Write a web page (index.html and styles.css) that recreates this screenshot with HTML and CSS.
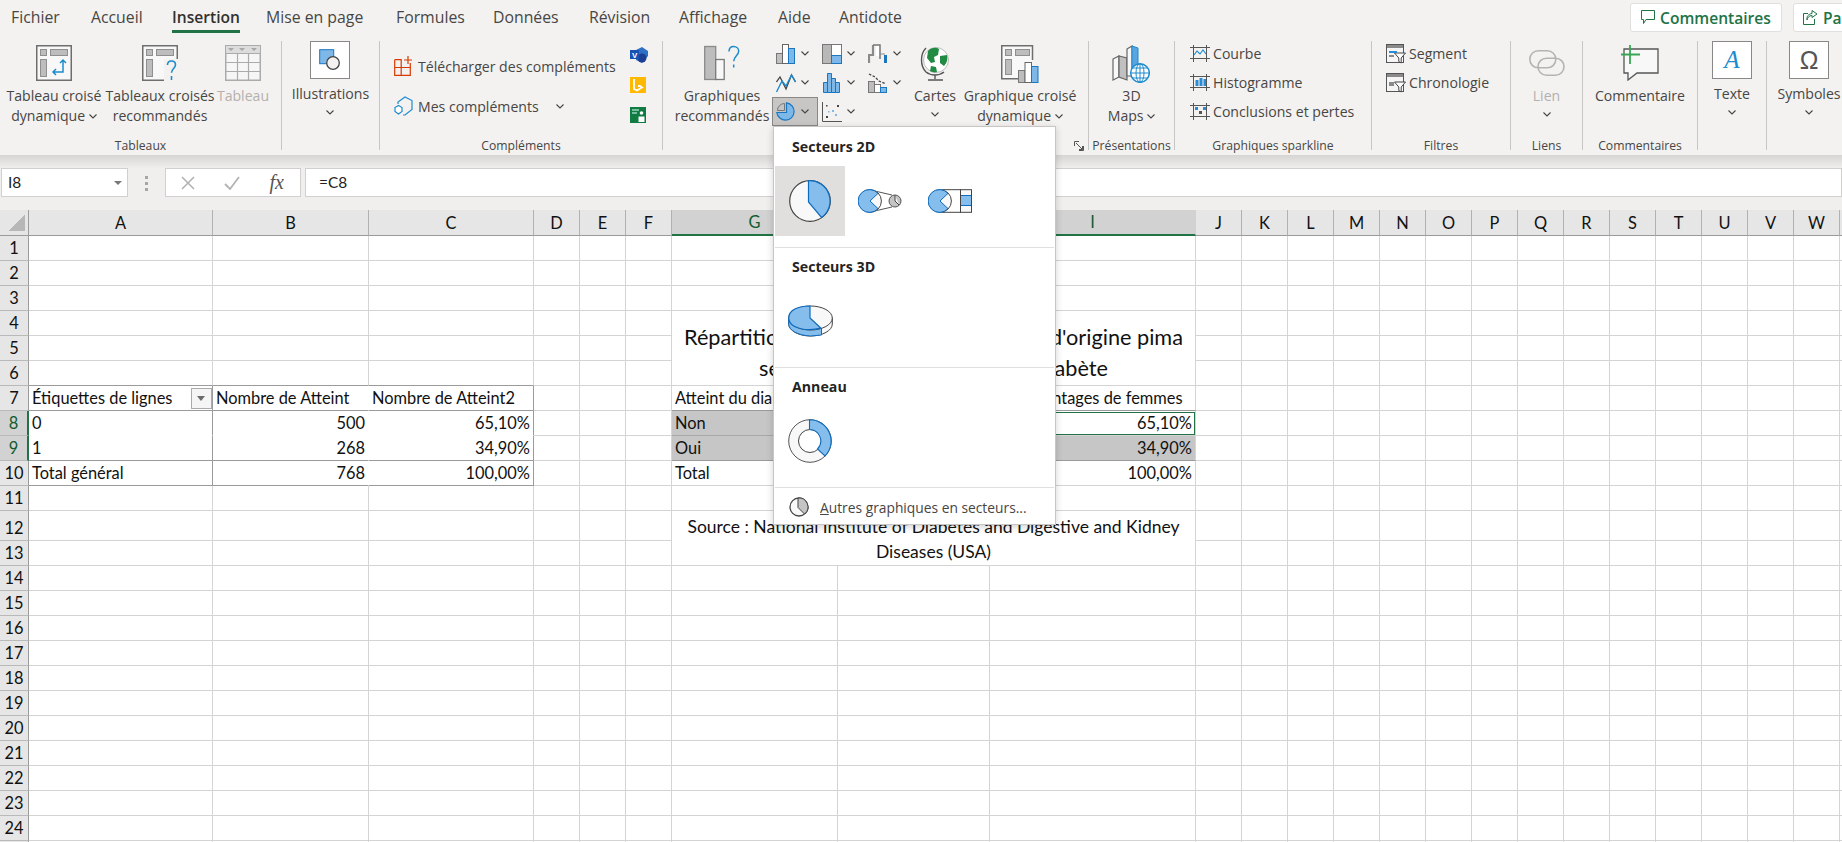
FILE: index.html
```html
<!DOCTYPE html>
<html lang="fr">
<head>
  <meta charset="UTF-8">
  <title>Excel - Insertion</title>
  <link rel="stylesheet" href="styles.css">
</head>
<body>

  <!-- icones du ruban -->
  <svg class="sprite" xmlns="http://www.w3.org/2000/svg">
    <symbol id="chev" viewBox="0 0 8 5"><path d="M.5.5 4 4 7.5.5" fill="none" stroke="#444" stroke-width="1.1"/></symbol>

    <symbol id="pivot-base" viewBox="0 0 36 36">
      <rect x=".75" y=".75" width="34.5" height="34.5" fill="#f8f8f8" stroke="#6e6e6e" stroke-width="1.5"/>
      <rect x="4.5" y="4.5" width="6" height="6" fill="#bdbdbd" stroke="#8f8f8f"/>
      <rect x="14.5" y="4.5" width="17" height="6" fill="#bdbdbd" stroke="#8f8f8f"/>
      <rect x="4.5" y="14.5" width="6" height="17" fill="#bdbdbd" stroke="#8f8f8f"/>
    </symbol>
    <symbol id="table-grey" viewBox="0 0 36 36">
      <rect x=".75" y=".75" width="34.5" height="34.5" fill="#f6f6f6" stroke="#ababab" stroke-width="1.5"/>
      <rect x="1" y="1" width="34" height="7" fill="#dcdcdc"/>
      <path d="M3 3h6l-3 3zM14 3h6l-3 3zM26 3h6l-3 3z" fill="#a8a8a8"/>
      <path d="M1 8.500h34M1 17.500h34M1 26.500h34M12.500 8v27M23.500 8v27" stroke="#ababab" stroke-width="1.200" fill="none"/>
    </symbol>

    <symbol id="i-col" viewBox="0 0 20 20">
      <rect x=".5" y="9.500" width="6" height="10" fill="#c0c0c0" stroke="#777"/>
      <rect x="6.500" y=".5" width="6" height="19" fill="#fff" stroke="#666"/>
      <rect x="12.500" y="4.500" width="6" height="15" fill="#7db8e8" stroke="#1b76c0"/>
    </symbol>
    <symbol id="i-tree" viewBox="0 0 20 20">
      <rect x=".5" y=".5" width="9" height="19" fill="#b8b8b8" stroke="#777"/>
      <rect x="9.500" y=".5" width="10" height="11" fill="#fff" stroke="#777"/>
      <rect x="9.500" y="11.500" width="10" height="8" fill="#7db8e8" stroke="#1b76c0"/>
    </symbol>
    <symbol id="i-fall" viewBox="0 0 20 20">
      <path d="M1 19v-8h4V1" fill="none" stroke="#8a8a8a" stroke-width="2.200"/>
      <path d="M5 1h7v14" fill="none" stroke="#777" stroke-width="1.500"/>
      <path d="M8 2h3v10H8z" fill="#fff"/>
      <path d="M17.500 11v8" stroke="#1b76c0" stroke-width="3"/>
      <path d="M12 10h5" stroke="#8a8a8a"/>
    </symbol>
    <symbol id="i-line" viewBox="0 0 20 20">
      <path d="M.5 9 4 4l6 12L15.500 2 19.500 9" fill="none" stroke="#444" stroke-width="1.300"/>
      <path d="M.5 19 6 8l4 5 5.500-11 4 7" fill="none" stroke="#1e8bcd" stroke-width="1.400"/>
    </symbol>
    <symbol id="i-hist" viewBox="0 0 20 20">
      <path d="M1.500 19.500v-10h4v10zM5.500 19.500V.5h4v19zM9.500 19.500v-14h4v14zM13.500 19.500v-10h4v10z" fill="#7db8e8" stroke="#1b76c0"/>
    </symbol>
    <symbol id="i-combo" viewBox="0 0 20 20">
      <rect x=".5" y="8.500" width="6" height="11" fill="#bdbdbd" stroke="#777"/>
      <rect x="6.500" y="11.500" width="6" height="8" fill="#fff" stroke="#777"/>
      <rect x="12.500" y="14.500" width="6" height="5" fill="#7db8e8" stroke="#1b76c0"/>
      <path d="M1 1l6 3 4 4 7 3" fill="none" stroke="#444" stroke-width="1.300" stroke-dasharray="2.500 1.500"/>
    </symbol>
    <symbol id="i-pie" viewBox="0 0 20 20">
      <path d="M8.500 1.500A7 7 0 0 0 1.500 8.500h7z" fill="#c4c4c4" stroke="#777"/>
      <path d="M10.500.8a8.700 8.700 0 1 1-9.700 9.700h9.700z" fill="#7db8e8" stroke="#1b76c0" stroke-width="1.200"/>
    </symbol>
    <symbol id="i-scatter" viewBox="0 0 20 20">
      <path d="M.5 0v19.500H20" fill="none" stroke="#555"/>
      <g fill="#444"><rect x="4" y="14" width="2" height="2"/><rect x="15" y="3" width="2" height="2"/><rect x="4" y="3" width="1.500" height="1.500"/></g>
      <g fill="#7db8e8"><rect x="10" y="8" width="2" height="2"/><rect x="6" y="9" width="1.500" height="1.500"/><rect x="13" y="12" width="2" height="2"/></g>
    </symbol>

    <symbol id="i-pie-large" viewBox="0 0 44 44">
      <circle cx="22" cy="22" r="20.300" fill="#f8f8f8" stroke="#444" stroke-width="1.200"/>
      <path d="M20.500 1.700A20.300 20.300 0 0 1 33.500 38.500L20.500 23z" fill="#85bdec" stroke="#0f6cbd" stroke-width="1.200"/>
    </symbol>
    <symbol id="pie-ofpie" viewBox="0 0 44 24">
      <path d="M11 .7 34 6M11 23.300 34 18" stroke="#555" fill="none"/>
      <circle cx="12" cy="12" r="11.400" fill="#f8f8f8" stroke="#444"/>
      <path d="M12 12 20 4.400A11.400 11.400 0 1 0 20 19.600z" fill="#85bdec" stroke="#0f6cbd"/>
      <circle cx="37" cy="12" r="6" fill="#c4c4c4" stroke="#555"/>
      <path d="M37 6v6l4 4" fill="#f8f8f8" stroke="#444"/>
    </symbol>
    <symbol id="pie-ofbar" viewBox="0 0 44 24">
      <path d="M11 .7h22M11 23.300h22" stroke="#444" fill="none"/>
      <circle cx="12" cy="12" r="11.400" fill="#f8f8f8" stroke="#444"/>
      <path d="M12 12 20 4.400A11.400 11.400 0 1 0 20 19.600z" fill="#85bdec" stroke="#0f6cbd"/>
      <rect x="32.500" y=".7" width="11" height="22.600" fill="#f8f8f8" stroke="#444"/>
      <rect x="33" y="6.500" width="10" height="10" fill="#85bdec"/>
      <path d="M33 6.500h10M33 16.500h10" stroke="#0f6cbd"/>
    </symbol>
    <symbol id="pie-3d" viewBox="0 0 45 32">
      <path d="M.7 13v6c0 6.500 9.600 12 21.800 12s21.800-5.500 21.800-12v-6z" fill="#f8f8f8" stroke="#444"/>
      <path d="M.7 13v6c0 6 8.800 11.300 21.800 12l11 -1V17z" fill="#85bdec" stroke="#0f6cbd"/>
      <ellipse cx="22.500" cy="13" rx="21.800" ry="12" fill="#f8f8f8" stroke="#444"/>
      <path d="M22 1v12l11 10.200C20 26.500.7 24 .7 13 .7 5 10 1 22 1z" fill="#85bdec" stroke="#0f6cbd" stroke-width="1.200"/>
    </symbol>
    <symbol id="pie-ring" viewBox="0 0 44 44">
      <circle cx="22" cy="22" r="21.300" fill="#f8f8f8" stroke="#555"/>
      <circle cx="22" cy="22" r="11.500" fill="#fff" stroke="#444"/>
      <path d="M21.500.8A21.300 21.300 0 0 1 37 37l-7.500-7A11.500 11.500 0 0 0 21.500 10.500z" fill="#85bdec" stroke="#0f6cbd" stroke-width="1.100"/>
    </symbol>

    <symbol id="spark-frame" viewBox="0 0 20 17">
      <path d="M0 2.500h20M0 13.500h20M3.500 0v17M16.500 0v17" stroke="#555" fill="none"/>
    </symbol>
    <symbol id="slicer" viewBox="0 0 20 20">
      <rect x=".5" y=".5" width="17" height="18" fill="#f5f5f5" stroke="#555"/>
      <rect x="1" y="1" width="16" height="3" fill="#8a8a8a"/>
      <path d="M8.500 9h11l-4.300 5v5l-2.400-1.500V14z" fill="#fff" stroke="#444"/>
    </symbol>
  </svg>

  <div class="app">

    <header class="tabbar">
      <nav class="tabs">
        <span class="tab">Fichier</span>
        <span class="tab">Accueil</span>
        <span class="tab"><span class="tab-active">Insertion</span></span>
        <span class="tab">Mise en page</span>
        <span class="tab">Formules</span>
        <span class="tab">Données</span>
        <span class="tab">Révision</span>
        <span class="tab">Affichage</span>
        <span class="tab">Aide</span>
        <span class="tab">Antidote</span>
      </nav>
      <div class="share-btns">
        <div class="top-btn top-comments">
          <svg width="14" height="15" viewBox="0 0 14 15"><path d="M.5.5h13v9H5L2.500 13.500v-4h-2z" fill="none" stroke="#217346"/></svg>
          Commentaires
        </div>
        <div class="top-btn top-share">
          <svg width="15" height="15" viewBox="0 0 15 15"><path d="M5 3.500H.5v11h11V9M9 .5l5 3.500-5 3.500V5.500C6 5.500 4.500 7.500 4 10c-.5-4 1.500-6 5-6.500z" fill="none" stroke="#217346"/></svg>
          Partager
        </div>
      </div>
    </header>

    <section class="ribbon">

      <div class="group w-tableaux">
        <div class="group-body">
          <div class="big w-108">
            <svg class="big-ico" width="36" height="36" viewBox="0 0 36 36"><use href="#pivot-base" width="36" height="36"/><path d="M27 15v12H17M24 18l3-3 3 3M20 24l-3 3 3 3" fill="none" stroke="#1e8bcd" stroke-width="1.500"/></svg>
            <span>Tableau croisé</span>
            <span>dynamique <svg class="chev"><use href="#chev"/></svg></span>
          </div>
          <div class="big w-104">
            <svg class="big-ico" width="36" height="36" viewBox="0 0 36 36"><use href="#pivot-base" width="36" height="36"/><rect x="22" y="14" width="15" height="22" fill="#f3f2f1"/><path d="M25.500 20c0-2.500 1.800-4 4-4s4 1.500 4 3.800c0 3.500-4 4-4 8M29.500 31v4" fill="none" stroke="#1e8bcd" stroke-width="1.600"/></svg>
            <span>Tableaux croisés</span>
            <span>recommandés</span>
          </div>
          <div class="big w-62 off">
            <svg class="big-ico" width="36" height="36"><use href="#table-grey"/></svg>
            <span>Tableau</span>
          </div>
        </div>
        <div class="group-name">Tableaux</div>
      </div>
      <i class="sep"></i>

      <div class="group w-illus">
        <div class="group-body center">
          <div class="boxed">
            <div class="box">
              <svg width="22" height="22" viewBox="0 0 22 22"><rect x=".7" y=".7" width="14" height="14" fill="#7db8e8" stroke="#1b76c0"/><circle cx="14" cy="14" r="6.300" fill="#f3f2f1" stroke="#444" stroke-width="1.300"/></svg>
            </div>
            <span>Illustrations</span>
            <svg class="chev"><use href="#chev"/></svg>
          </div>
        </div>
        <div class="group-name"></div>
      </div>
      <i class="sep"></i>

      <div class="group w-addins">
        <div class="group-body">
          <div class="addin-rows">
            <div class="addin-row">
              <svg width="20" height="20" viewBox="0 0 20 20"><path d="M.7 3.700h6.500v15.600M.7 11.500h15.600M.7 3.700v15.600h15.600V7M7.500 3.700" fill="none" stroke="#d83b01" stroke-width="1.200"/><path d="M14 0v8M10 4h8" stroke="#d83b01" stroke-width="1.200"/></svg>
              <span>Télécharger des compléments</span>
            </div>
            <div class="addin-row">
              <svg width="20" height="20" viewBox="0 0 20 20"><path d="M4 8V6l7-5 7 3.500v9l-7 5.500H9" fill="none" stroke="#1e8bcd" stroke-width="1.200"/><path d="M4.500 9.500 8 11.500v4L4.500 18 1 15.500v-4z" fill="#fff" stroke="#1e8bcd" stroke-width="1.200"/></svg>
              <span>Mes compléments</span>
              <svg class="chev addin-chev"><use href="#chev"/></svg>
            </div>
          </div>
          <div class="addin-apps">
            <svg width="18" height="16" viewBox="0 0 18 16"><path d="M6 3 12 0l6 4v5l-6 7-6-3z" fill="#2f6fc4"/><circle cx="12" cy="11" r="4.500" fill="#1c3f94"/><rect x="0" y="3" width="9" height="9" fill="#1851b4"/><text x="2" y="10.500" class="app-letter">V</text></svg>
            <svg width="18" height="16" viewBox="0 0 18 16"><rect width="16" height="16" fill="#ffb900"/><path d="M4 2v10l3 1.500 5-3-2-1.500H8" fill="none" stroke="#fff" stroke-width="1.800"/></svg>
            <svg width="18" height="16" viewBox="0 0 18 16"><rect width="16" height="16" fill="#107c41"/><path d="M2 3h7M2 6h5" stroke="#dff" stroke-width="1.200"/><circle cx="11.500" cy="6" r="1.800" fill="#fff"/><path d="M8.500 15v-5.500h6V15z" fill="#fff"/></svg>
          </div>
        </div>
        <div class="group-name">Compléments</div>
      </div>
      <i class="sep"></i>

      <div class="group w-charts">
        <div class="group-body">
          <div class="big w-rec">
            <svg class="big-ico" width="36" height="35" viewBox="0 0 36 35"><rect x=".7" y="1" width="11" height="33" fill="#bdbdbd" stroke="#8a8a8a" stroke-width="1.300"/><rect x="11.700" y="14" width="8.500" height="20" fill="#f8f8f8" stroke="#7a7a7a" stroke-width="1.300"/><path d="M25 6c0-3 2-5 4.700-5s5 2 5 4.800c0 4-5 5-5 10M29.700 19v3" fill="none" stroke="#1e8bcd" stroke-width="1.500"/></svg>
            <span>Graphiques</span>
            <span>recommandés</span>
          </div>
          <div class="chart-grid">
            <div class="mini"><svg width="20" height="20"><use href="#i-col"/></svg><svg class="chev"><use href="#chev"/></svg></div>
            <div class="mini"><svg width="20" height="20"><use href="#i-tree"/></svg><svg class="chev"><use href="#chev"/></svg></div>
            <div class="mini"><svg width="20" height="20"><use href="#i-fall"/></svg><svg class="chev"><use href="#chev"/></svg></div>
            <div class="mini"><svg width="20" height="20"><use href="#i-line"/></svg><svg class="chev"><use href="#chev"/></svg></div>
            <div class="mini"><svg width="20" height="20"><use href="#i-hist"/></svg><svg class="chev"><use href="#chev"/></svg></div>
            <div class="mini"><svg width="20" height="20"><use href="#i-combo"/></svg><svg class="chev"><use href="#chev"/></svg></div>
            <div class="mini mini-open"><svg width="20" height="20"><use href="#i-pie"/></svg><svg class="chev"><use href="#chev"/></svg></div>
            <div class="mini"><svg width="20" height="20"><use href="#i-scatter"/></svg><svg class="chev"><use href="#chev"/></svg></div>
          </div>
          <div class="big w-cartes">
            <svg class="big-ico" width="30" height="36" viewBox="0 0 30 36">
              <circle cx="16" cy="15" r="12.500" fill="#fff" stroke="#bbb"/>
              <path d="M8 6c3-3.500 8-4 11-2l-1 6-4 2 1 5-4 1-4-5zM20 11l7-1c1 4 0 8-3 11l-4-3zM11 21l5 1 1 5c-3 1-5 0-7-1z" fill="#218a43"/>
              <path d="M6 3C0 9 0 21 6 27c5 4 13 4 18 0" fill="none" stroke="#555" stroke-width="1.400"/>
              <path d="M15 30v4M8 35h15" stroke="#555" stroke-width="1.400"/>
            </svg>
            <span>Cartes</span>
            <svg class="chev chev-line"><use href="#chev"/></svg>
          </div>
          <div class="big w-120">
            <svg class="big-ico" width="38" height="38" viewBox="0 0 38 38">
              <path d="M31.500 15V.75H.75v33h17" fill="#f8f8f8" stroke="#6e6e6e" stroke-width="1.500"/>
              <rect x="4.500" y="4.500" width="6" height="6" fill="#bdbdbd" stroke="#8f8f8f"/>
              <rect x="14.500" y="4.500" width="14" height="6" fill="#bdbdbd" stroke="#8f8f8f"/>
              <rect x="4.500" y="14.500" width="6" height="15" fill="#bdbdbd" stroke="#8f8f8f"/>
              <rect x="17.500" y="25.500" width="6.500" height="12" fill="#bdbdbd" stroke="#777"/>
              <rect x="24" y="17.500" width="6.500" height="20" fill="#fff" stroke="#666"/>
              <rect x="30.500" y="21.500" width="6.500" height="16" fill="#7db8e8" stroke="#1b76c0"/>
            </svg>
            <span>Graphique croisé</span>
            <span>dynamique <svg class="chev"><use href="#chev"/></svg></span>
          </div>
        </div>
        <div class="group-name">Graphiques
          <svg class="launcher" width="10" height="10" viewBox="0 0 10 10"><path d="M9.500 5v4.500H5M.5 5V.5H5M2 2l6.500 6.500M5 8.500h3.500V5" fill="none" stroke="#555"/></svg>
        </div>
      </div>
      <i class="sep"></i>

      <div class="group w-pres">
        <div class="group-body center">
          <div class="big">
            <svg class="big-ico" width="38" height="38" viewBox="0 0 38 38">
              <path d="M1 14l6-3v21l-6 3z" fill="#f8f8f8" stroke="#666" stroke-width="1.200"/>
              <path d="M7 11l8 2v22l-8-3z" fill="#c0c0c0" stroke="#666" stroke-width="1.200"/>
              <path d="M15 4l5-3v30H15z" fill="#f8f8f8" stroke="#666" stroke-width="1.200"/>
              <path d="M20 1l6 2v20h-6z" fill="#5aa5e0" stroke="#1e8bcd"/>
              <circle cx="28" cy="28" r="9.300" fill="#fff" stroke="#1e8bcd" stroke-width="1.500"/>
              <path d="M19 28h18M28 19v18M21 23h14M21 33h14" stroke="#1e8bcd" fill="none"/>
              <ellipse cx="28" cy="28" rx="4" ry="9.300" fill="none" stroke="#1e8bcd"/>
            </svg>
            <span>3D</span>
            <span>Maps <svg class="chev"><use href="#chev"/></svg></span>
          </div>
        </div>
        <div class="group-name">Présentations</div>
      </div>
      <i class="sep"></i>

      <div class="group w-spark">
        <div class="group-body col-list">
          <div class="list-row">
            <svg width="20" height="17"><use href="#spark-frame"/><path d="M4 10l3-4 3 3 3-4 3 4" fill="none" stroke="#1e8bcd" stroke-width="1.100"/></svg>
            <span>Courbe</span>
          </div>
          <div class="list-row">
            <svg width="20" height="17"><use href="#spark-frame"/><path d="M5.500 6h3v6h-3zM9.500 4h3v8h-3zM13.500 5h2.500v7h-2.500z" fill="#2a8ad4"/></svg>
            <span>Histogramme</span>
          </div>
          <div class="list-row">
            <svg width="20" height="17"><use href="#spark-frame"/><path d="M5 4h3v3H5zM13 4h3v3h-3z" fill="#2a8ad4"/><path d="M9 8h3v3H9z" fill="#555"/></svg>
            <span>Conclusions et pertes</span>
          </div>
        </div>
        <div class="group-name">Graphiques sparkline</div>
      </div>
      <i class="sep"></i>

      <div class="group w-filters">
        <div class="group-body col-list">
          <div class="list-row">
            <svg width="20" height="20"><use href="#slicer"/><path d="M3 7h8v2H3z" fill="#2a8ad4"/><path d="M3 11h5v2H3z" fill="#8a8a8a"/></svg>
            <span>Segment</span>
          </div>
          <div class="list-row">
            <svg width="20" height="20"><use href="#slicer"/><rect x="3" y="9" width="5" height="4" fill="#8a8a8a"/></svg>
            <span>Chronologie</span>
          </div>
        </div>
        <div class="group-name">Filtres</div>
      </div>
      <i class="sep"></i>

      <div class="group w-links">
        <div class="group-body center">
          <div class="big off">
            <svg class="ico-link" width="36" height="26" viewBox="0 0 36 26"><g fill="none" stroke="#b5b3b1" stroke-width="1.600"><rect x=".8" y=".8" width="26" height="17" rx="8.500"/><rect x="9" y="8.200" width="26" height="17" rx="8.500"/></g></svg>
            <span>Lien</span>
            <svg class="chev chev-line"><use href="#chev"/></svg>
          </div>
        </div>
        <div class="group-name">Liens</div>
      </div>
      <i class="sep"></i>

      <div class="group w-notes">
        <div class="group-body center">
          <div class="big">
            <svg class="big-ico" width="38" height="36" viewBox="0 0 38 36">
              <path d="M3 4h34v24H16l-9 7v-7H3z" fill="#f8f8f8" stroke="#555" stroke-width="1.300"/>
              <path d="M9 0v19M0 9.500h19" stroke="#3aa655" stroke-width="1.800"/>
            </svg>
            <span>Commentaire</span>
          </div>
        </div>
        <div class="group-name">Commentaires</div>
      </div>
      <i class="sep"></i>

      <div class="group w-text">
        <div class="group-body center">
          <div class="boxed">
            <div class="box glyph-a">A</div>
            <span>Texte</span>
            <svg class="chev"><use href="#chev"/></svg>
          </div>
        </div>
      </div>
      <i class="sep"></i>

      <div class="group w-sym">
        <div class="group-body center">
          <div class="boxed">
            <div class="box glyph-o">Ω</div>
            <span>Symboles</span>
            <svg class="chev"><use href="#chev"/></svg>
          </div>
        </div>
      </div>
    </section>

    <div class="ribbon-shadow"></div>

    <div class="formula-bar">
      <div class="name-box">I8<i class="tri"></i></div>
      <div class="grip"><i></i><i></i><i></i></div>
      <div class="fx-btns">
        <svg width="14" height="14" viewBox="0 0 14 14"><path d="M1 1l12 12M13 1 1 13" stroke="#b3b3b3" stroke-width="1.600"/></svg>
        <svg width="16" height="14" viewBox="0 0 16 14"><path d="M1 8l5 5L15 1" fill="none" stroke="#b3b3b3" stroke-width="1.800"/></svg>
        <span class="fx">fx</span>
      </div>
      <div class="formula-input">=C8</div>
    </div>

    <div class="sheet-wrap" id="sheetWrap"></div>

    <!-- menu deroulant Secteurs -->
    <div class="pie-menu">
      <div class="menu-sec">
        <h4>Secteurs 2D</h4>
        <div class="menu-items">
          <div class="menu-item hover"><svg width="44" height="44"><use href="#i-pie-large"/></svg></div>
          <div class="menu-item"><svg width="44" height="24"><use href="#pie-ofpie"/></svg></div>
          <div class="menu-item"><svg width="44" height="24"><use href="#pie-ofbar"/></svg></div>
        </div>
      </div>
      <div class="menu-sec">
        <h4>Secteurs 3D</h4>
        <div class="menu-items">
          <div class="menu-item"><svg width="45" height="32"><use href="#pie-3d"/></svg></div>
        </div>
      </div>
      <div class="menu-sec">
        <h4>Anneau</h4>
        <div class="menu-items">
          <div class="menu-item"><svg width="44" height="44"><use href="#pie-ring"/></svg></div>
        </div>
      </div>
      <div class="menu-foot">
        <svg width="20" height="20" viewBox="0 0 20 20"><circle cx="10" cy="10" r="9" fill="#f8f8f8" stroke="#444" stroke-width="1.300"/><path d="M9 1v9.500l6.500 6.500A9 9 0 0 0 9 1z" fill="#c4c4c4" stroke="#444"/></svg>
        <span><u>A</u>utres graphiques en secteurs...</span>
      </div>
    </div>

  </div>

  <script src="sheet.js"></script>
</body>
</html>
```

FILE: styles.css
```css
* {
  box-sizing: border-box;
}

body {
  margin: 0;
  width: 1842px;
  height: 842px;
  overflow: hidden;
  background: #fff;
  font-family: "Open Sans", sans-serif;
  font-size: 14.1px;
  color: #484644;
}

.sprite {
  position: absolute;
  width: 0;
  height: 0;
}

.app {
  position: relative;
  width: 1842px;
  height: 842px;
  overflow: hidden;
}

/* onglets */
.tabbar {
  display: flex;
  height: 38px;
  background: #f3f2f1;
}

.tabs {
  display: grid;
  grid-template-columns: 80px 81px 94px 130px 97px 96px 90px 99px 61px 90px;
  padding: 7px 0 0 11px;
  font-size: 15.8px;
  line-height: 20px;
  white-space: nowrap;
}

.tab-active {
  display: inline-block;
  height: 26px;
  border-bottom: 3px solid #217346;
  font-weight: 600;
  font-size: 15.6px;
  color: #323130;
}

.share-btns {
  display: flex;
  gap: 11px;
  margin-left: auto;
  padding-top: 3px;
  width: 212px;
  flex-shrink: 0;
}

.top-btn {
  display: flex;
  align-items: center;
  gap: 5px;
  height: 29px;
  background: #fff;
  border: 1px solid #e1dfdd;
  border-radius: 3px;
  font-size: 15.6px;
  font-weight: 600;
  color: #217346;
  white-space: nowrap;
}

.top-btn svg {
  flex: none;
}

.top-comments {
  width: 152px;
  flex-shrink: 0;
  padding-left: 10px;
}

.top-share {
  width: 80px;
  flex-shrink: 0;
  padding-left: 9px;
}

/* ruban */
.ribbon {
  display: flex;
  height: 117px;
  padding-top: 3px;
  background: #f3f2f1;
}

.sep {
  flex: none;
  width: 1px;
  height: 109px;
  background: #c8c6c4;
}

.group {
  flex: none;
  display: flex;
  flex-direction: column;
  white-space: nowrap;
}

.group-body {
  display: flex;
  height: 98px;
}

.group-body.center {
  justify-content: center;
}

.group-name {
  position: relative;
  height: 14px;
  line-height: 14px;
  text-align: center;
  font-size: 12.2px;
}

.w-tableaux { width: 281px; }
.w-illus { width: 97px; }
.w-addins { width: 282px; }
.w-charts { width: 425px; padding-left: 7px; }
.w-pres { width: 85px; }
.w-spark { width: 196px; }
.w-filters { width: 138px; }
.w-links { width: 71px; }
.w-notes { width: 114px; }
.w-text { width: 68px; }
.w-sym { width: 84px; }

.w-108 { width: 108px; }
.w-104 { width: 104px; }
.w-62 { width: 62px; }
.w-120 { width: 120px; }
.w-rec { width: 104px; }
.w-cartes { width: 50px; }

.w-charts .group-name {
  margin-left: -7px;
}

.big {
  display: flex;
  flex-direction: column;
  align-items: center;
  line-height: 20px;
}

.big-ico {
  height: 36px;
  margin: 4px 0 5px;
  flex: none;
}

.w-charts .w-120 .big-ico,
.w-pres .big-ico {
  height: 38px;
  margin: 4px 0 3px;
}

.ico-link {
  margin: 9px 0 10px;
  flex: none;
}

.off {
  color: #b3b0ad;
}

.chev {
  display: inline-block;
  width: 8px;
  height: 5px;
  vertical-align: 2px;
}

.chev-line {
  margin-top: 6px;
}

.boxed {
  display: flex;
  flex-direction: column;
  align-items: center;
  line-height: 20px;
}

.boxed .chev {
  margin-top: 6px;
}

.box {
  display: flex;
  align-items: center;
  justify-content: center;
  width: 40px;
  height: 38px;
  margin-bottom: 5px;
  background: #fff;
  border: 1px solid #8a8886;
}

.glyph-a {
  font-family: "Liberation Serif", serif;
  font-style: italic;
  font-size: 25px;
  color: #1e8bcd;
}

.glyph-o {
  font-family: "Liberation Sans", sans-serif;
  font-size: 25px;
  color: #555;
}

/* complements */
.addin-rows {
  width: 250px;
  padding: 15px 0 0 14px;
  display: flex;
  flex-direction: column;
  gap: 20px;
}

.addin-row {
  display: flex;
  align-items: center;
  gap: 4px;
  height: 20px;
  position: relative;
}

.addin-chev {
  margin-left: 13px;
  vertical-align: 0;
}

.addin-apps {
  display: flex;
  flex-direction: column;
  gap: 14px;
  padding-top: 6px;
}

.app-letter {
  font-family: "Liberation Sans", sans-serif;
  font-size: 8px;
  font-weight: 700;
  fill: #fff;
}

/* petits graphiques */
.chart-grid {
  display: grid;
  grid-template-columns: repeat(3, 46px);
  grid-auto-rows: 29px;
  margin: -2px 0 0 -2px;
  width: 138px;
  height: 87px;
  flex: none;
}

.mini {
  display: flex;
  align-items: center;
  gap: 5px;
  padding-left: 4px;
}

.mini-open {
  background: #c8c6c4;
  border: 1px solid #8a8886;
  padding-left: 3px;
}

.launcher {
  position: absolute;
  right: 4px;
  top: 2px;
}

/* listes sparkline et filtres */
.col-list {
  flex-direction: column;
  margin-top: -2px;
  height: 100px;
  padding-left: 15px;
}

.list-row {
  display: flex;
  align-items: center;
  gap: 3px;
  height: 29px;
}

.w-filters .col-list {
  padding-left: 14px;
}

/* barre de formule */
.ribbon-shadow {
  height: 13px;
  background: linear-gradient(#d6d5d4, #efeeed);
}

.formula-bar {
  display: flex;
  height: 42px;
  padding: 0 0 13px 1px;
  background: #f0efee;
  font-family: "Lato", sans-serif;
  color: #222;
}

.name-box,
.fx-btns,
.formula-input {
  height: 29px;
  background: #fff;
  border: 1px solid #d2d0ce;
}

.name-box {
  position: relative;
  width: 127px;
  padding-left: 6px;
  line-height: 27px;
  font-size: 15.4px;
}

.tri {
  position: absolute;
  right: 5px;
  top: 12px;
  border: 4px solid transparent;
  border-top: 4px solid #777;
  border-bottom: 0;
}

.grip {
  display: flex;
  flex-direction: column;
  align-items: center;
  gap: 3px;
  width: 37px;
  padding-top: 8px;
}

.grip i {
  width: 3px;
  height: 3px;
  background: #a6a6a6;
}

.fx-btns {
  display: flex;
  align-items: center;
  justify-content: space-between;
  width: 136px;
  padding: 0 16px 0 15px;
}

.fx {
  font-family: "Liberation Serif", serif;
  font-style: italic;
  font-size: 20px;
  color: #555;
}

.formula-input {
  flex: 1;
  margin-left: 4px;
  padding-left: 13px;
  line-height: 27px;
  font-size: 15.4px;
}

/* feuille */
.sheet {
  border-collapse: separate;
  border-spacing: 0;
  table-layout: fixed;
  width: 1886px;
  font-family: "Lato", sans-serif;
  font-size: 16.4px;
  color: #111;
}

.sheet th,
.sheet td {
  padding: 0 3px 1px;
  border-right: 1px solid #d4d4d4;
  border-bottom: 1px solid #d4d4d4;
  overflow: hidden;
  white-space: nowrap;
  vertical-align: bottom;
  line-height: 22px;
  height: 25px;
  font-weight: 400;
}

.sheet thead th {
  height: 24px;
  line-height: 24px;
  padding: 0 3px;
  background: #e6e6e6;
  border-right-color: #b1b1b1;
  border-bottom-color: #9b9b9b;
  text-align: center;
  vertical-align: middle;
}

.sheet thead th.corner {
  padding: 4px 3px 3px 9px;
  border-right-color: #9b9b9b;
}

.corner i {
  display: block;
  width: 16px;
  height: 16px;
  background: linear-gradient(to bottom right, transparent 50%, #b7b7b7 50%);
}

.sheet thead th.col-sel {
  background: #d2d2d2;
  color: #0e5c2f;
  border-bottom: 2px solid #217346;
  border-right-color: #d2d2d2;
}

.sheet tbody th {
  background: #e6e6e6;
  border-right-color: #9b9b9b;
  border-bottom-color: #b9b9b9;
  text-align: center;
  padding: 0 0 1px;
}

.sheet tbody th.row-sel {
  background: #d2d2d2;
  color: #0e5c2f;
  border-right: 2px solid #217346;
}

.row-tall th,
.row-tall td {
  height: 30px;
}

.num {
  text-align: right;
}

.center-txt {
  text-align: center;
}

/* bordures du tableau croise */
.pv-head-top { border-bottom-color: #9b9b9b !important; }
.pv-line { border-bottom-color: #9b9b9b !important; }
.pv-noline { border-bottom-color: #fff !important; }
.pv-right { border-right-color: #9b9b9b !important; }
.pv-noright { border-right-color: #fff !important; }

.filter-cell {
  position: relative;
}

.filter-btn {
  position: absolute;
  right: 0;
  top: 2px;
  width: 21px;
  height: 21px;
  background: #f5f5f5;
  border: 1px solid #ababab;
}

.filter-btn::after {
  content: "";
  position: absolute;
  left: 5px;
  top: 7px;
  border: 4px solid transparent;
  border-top: 5px solid #6b6b6b;
  border-bottom: 0;
}

.sheet td.merged-title {
  font-size: 21.7px;
  line-height: 31px;
  text-align: center;
}

.sheet td.merged-source {
  font-size: 17.5px;
  line-height: 25px;
  text-align: center;
}

.sel-fill {
  background: #c6c6c6;
}

.sheet td.sel-line {
  border-bottom-color: #a8a8a8;
}

.sheet td.active {
  background: #fff;
  outline: 1px solid #217346;
  outline-offset: -2px;
}

.tbl-line {
  border-bottom-color: #9b9b9b !important;
}

/* menu secteurs */
.pie-menu {
  position: absolute;
  left: 773px;
  top: 126px;
  width: 283px;
  height: 399px;
  padding: 1px;
  background: #fff;
  border: 1px solid #c8c6c4;
  box-shadow: 0 2px 7px rgba(0, 0, 0, 0.18);
}

.menu-sec {
  height: 120px;
  border-bottom: 1px solid #e1dfdd;
}

.menu-sec h4 {
  margin: 0;
  height: 38px;
  padding: 9px 0 0 17px;
  font-size: 14.2px;
  line-height: 20px;
  font-weight: 700;
  color: #252423;
}

.menu-items {
  display: flex;
}

.menu-item {
  display: flex;
  align-items: center;
  justify-content: center;
  width: 70px;
  height: 70px;
}

.menu-item.hover {
  background: #e1dfdd;
}

.menu-foot {
  display: flex;
  align-items: center;
  gap: 11px;
  height: 38px;
  padding-left: 14px;
  font-size: 13.8px;
  color: #484644;
}
```

FILE: sheet.js
```js
// construit la grille : 25 lignes, colonnes A a X
const colonnes = { A: 184, B: 156, C: 165, D: 46, E: 46, F: 46, G: 166, H: 152, I: 206 };
const lettres = "ABCDEFGHIJKLMNOPQRSTUVWX".split("");
const colSel = ["G", "H", "I"];

const titre = "Répartition de l'ensemble des femmes d'origine pima<br>selon leur atteinte ou non du diabète";
const source = "Source : National Institute of Diabetes and Digestive and Kidney<br>Diseases (USA)";

const cellules = {
  G4: { html: titre, cls: "merged-title", colspan: 3, rowspan: 3 },
  A6: { cls: "pv-head-top" }, B6: { cls: "pv-head-top" }, C6: { cls: "pv-head-top" },
  A7: { html: 'Étiquettes de lignes<span class="filter-btn"></span>', cls: "filter-cell pv-line pv-right" },
  B7: { html: "Nombre de Atteint", cls: "pv-line pv-noright" },
  C7: { html: "Nombre de Atteint2", cls: "pv-line pv-right" },
  G7: { html: "Atteint du diabète", cls: "tbl-line" },
  H7: { html: "Nombre de femmes", cls: "center-txt tbl-line" },
  I7: { html: "Pourcentages de femmes", cls: "center-txt tbl-line" },
  A8: { html: "0", cls: "pv-noline pv-right" },
  B8: { html: "500", cls: "num pv-noline pv-noright" },
  C8: { html: "65,10%", cls: "num pv-noline pv-right" },
  G8: { html: "Non", cls: "sel-fill sel-line" },
  H8: { html: "500", cls: "num sel-fill sel-line" },
  I8: { html: "65,10%", cls: "num active" },
  A9: { html: "1", cls: "pv-line pv-right" },
  B9: { html: "268", cls: "num pv-line pv-noright" },
  C9: { html: "34,90%", cls: "num pv-line pv-right" },
  G9: { html: "Oui", cls: "sel-fill tbl-line" },
  H9: { html: "268", cls: "num sel-fill tbl-line" },
  I9: { html: "34,90%", cls: "num sel-fill tbl-line" },
  A10: { html: "Total général", cls: "pv-line pv-right" },
  B10: { html: "768", cls: "num pv-line pv-noright" },
  C10: { html: "100,00%", cls: "num pv-line pv-right" },
  G10: { html: "Total" },
  H10: { html: "768", cls: "num" },
  I10: { html: "100,00%", cls: "num" },
  G12: { html: source, cls: "merged-source", colspan: 3, rowspan: 2 }
};

// cellules recouvertes par une fusion
const couvertes = ["H4", "I4", "G5", "H5", "I5", "G6", "H6", "I6", "H12", "I12", "G13", "H13", "I13"];

let html = '<table class="sheet"><colgroup><col style="width:29px">';
lettres.forEach((l) => {
  html += `<col style="width:${colonnes[l] || 46}px">`;
});
html += '</colgroup><thead><tr><th class="corner"><i></i></th>';
lettres.forEach((l) => {
  html += `<th class="${colSel.includes(l) ? "col-sel" : ""}">${l}</th>`;
});
html += "</tr></thead><tbody>";

for (let r = 1; r <= 25; r++) {
  html += `<tr class="${r === 12 ? "row-tall" : ""}"><th class="${r === 8 || r === 9 ? "row-sel" : ""}">${r}</th>`;
  lettres.forEach((l) => {
    const id = l + r;
    if (couvertes.includes(id)) return;
    const c = cellules[id] || {};
    const span = (c.colspan ? ` colspan="${c.colspan}"` : "") + (c.rowspan ? ` rowspan="${c.rowspan}"` : "");
    html += `<td class="${c.cls || ""}"${span}>${c.html || ""}</td>`;
  });
  html += "</tr>";
}
html += "</tbody></table>";

document.getElementById("sheetWrap").innerHTML = html;
```
